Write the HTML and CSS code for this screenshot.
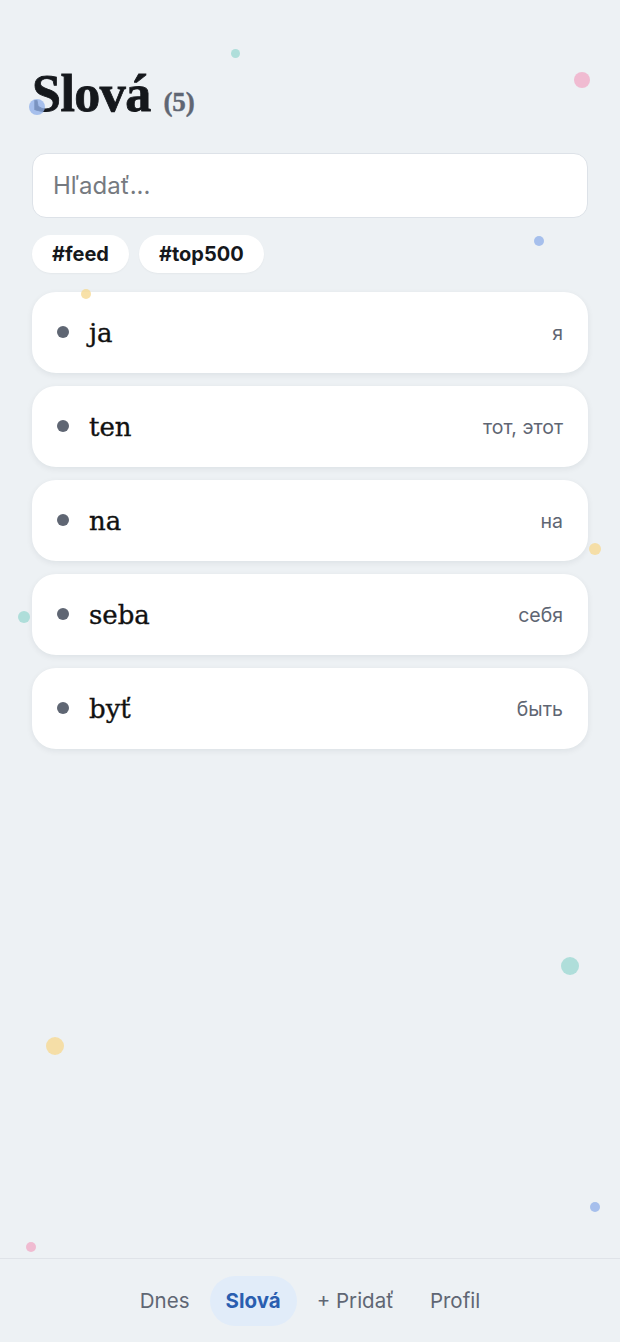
FILE: index.html
```html
<!DOCTYPE html>
<html lang="sk">
<head>
    <meta charset="UTF-8">
    <meta name="viewport" content="width=device-width, initial-scale=1.0">
    <title>Slová</title>
    <link rel="stylesheet" href="styles.css">
</head>
<body>
    <main class="page">
        <h1 class="title">Slová <span class="count">(5)</span></h1>

        <input class="search" type="text" placeholder="Hľadať...">

        <div class="tags">
            <button class="tag">#feed</button>
            <button class="tag">#top500</button>
        </div>

        <ul class="words">
            <li class="word"><span class="bullet"></span><span class="term">ja</span><span class="meaning">я</span></li>
            <li class="word"><span class="bullet"></span><span class="term">ten</span><span class="meaning">тот, этот</span></li>
            <li class="word"><span class="bullet"></span><span class="term">na</span><span class="meaning">на</span></li>
            <li class="word"><span class="bullet"></span><span class="term">seba</span><span class="meaning">себя</span></li>
            <li class="word"><span class="bullet"></span><span class="term">byť</span><span class="meaning">быть</span></li>
        </ul>
    </main>

    <nav class="tabbar">
        <a class="tab" href="#">Dnes</a>
        <a class="tab active" href="#">Slová</a>
        <a class="tab" href="#">+ Pridať</a>
        <a class="tab" href="#">Profil</a>
    </nav>

    <!-- decorative floating dots -->
    <div class="dots" aria-hidden="true">
        <span class="dot teal" style="left:231px;top:49px;width:9px;height:9px"></span>
        <span class="dot pink" style="left:574px;top:72px;width:16px;height:16px"></span>
        <span class="dot blue" style="left:29px;top:99px;width:16px;height:16px"></span>
        <span class="dot blue" style="left:534px;top:236px;width:10px;height:10px"></span>
        <span class="dot yellow" style="left:81px;top:289px;width:10px;height:10px"></span>
        <span class="dot yellow" style="left:589px;top:543px;width:12px;height:12px"></span>
        <span class="dot teal" style="left:18px;top:611px;width:12px;height:12px"></span>
        <span class="dot teal" style="left:561px;top:957px;width:18px;height:18px"></span>
        <span class="dot yellow" style="left:46px;top:1037px;width:18px;height:18px"></span>
        <span class="dot blue" style="left:590px;top:1202px;width:10px;height:10px"></span>
        <span class="dot pink" style="left:26px;top:1242px;width:10px;height:10px"></span>
    </div>
</body>
</html>
```

FILE: styles.css
```css
* {
    margin: 0;
    padding: 0;
    box-sizing: border-box;
}

body {
    font-family: Inter, "Noto Sans", sans-serif;
    background: #edf1f4;
    color: #111418;
    min-height: 100vh;
    display: flex;
    flex-direction: column;
    position: relative;
    overflow: hidden;
}

.dots {
    position: absolute;
    inset: 0;
    pointer-events: none;
    z-index: 2;
}

.dot {
    position: absolute;
    border-radius: 50%;
    opacity: 0.8;
}

.teal { background: #9fdad3; }
.pink { background: #f0aec8; }
.blue { background: #93b3ea; }
.yellow { background: #f6d993; }

.page {
    flex: 1;
    padding: 64px 32px 0;
}

.title {
    font-family: "Liberation Serif", "DejaVu Serif", serif;
    font-weight: 700;
    font-size: 52px;
    line-height: 60px;
    letter-spacing: -0.5px;
    color: #15181c;
    -webkit-text-stroke: 0.8px #15181c;
}

.count {
    font-size: 27px;
    color: #5f6673;
    letter-spacing: 0;
    -webkit-text-stroke: 0.4px #5f6673;
}

.search {
    display: block;
    width: 100%;
    height: 65px;
    margin-top: 21px;
    padding: 0 20px;
    border: 1px solid #dde2e8;
    border-radius: 14px;
    background: #fff;
    font-family: Inter, sans-serif;
    font-size: 24px;
    color: #111;
    outline: none;
}

.search::placeholder {
    color: #767a80;
}

.tags {
    display: flex;
    gap: 10px;
    margin-top: 17px;
}

.tag {
    height: 38px;
    padding: 0 20px;
    border: none;
    border-radius: 19px;
    background: #fff;
    font-family: Inter, sans-serif;
    font-weight: 700;
    font-size: 20px;
    color: #15181c;
    box-shadow: 0 1px 2px rgba(0, 0, 0, 0.04);
}

.words {
    list-style: none;
    display: flex;
    flex-direction: column;
    gap: 13px;
    margin-top: 19px;
}

.word {
    display: flex;
    align-items: center;
    height: 81px;
    padding: 0 25px;
    background: #fff;
    border-radius: 24px;
    box-shadow: 0 2px 6px rgba(20, 30, 45, 0.07);
}

.bullet {
    width: 12px;
    height: 12px;
    border-radius: 50%;
    background: #5f6673;
    margin-right: 20px;
    margin-top: -2px;
}

.term {
    font-family: "DejaVu Serif", "Liberation Serif", serif;
    font-size: 26px;
    color: #111;
    flex: 1;
    -webkit-text-stroke: 0.35px #111;
}

.meaning {
    font-size: 19.5px;
    color: #5f6673;
}

.tabbar {
    height: 84px;
    border-top: 1px solid #dfe3e8;
    display: flex;
    align-items: center;
    justify-content: center;
    gap: 4px;
}

.tab {
    height: 50px;
    line-height: 50px;
    padding: 0 16px;
    border-radius: 25px;
    font-size: 20.5px;
    color: #5f6673;
    text-decoration: none;
}

.tab.active {
    background: #e1ecf9;
    color: #2a5eb0;
    font-weight: 700;
}
```
